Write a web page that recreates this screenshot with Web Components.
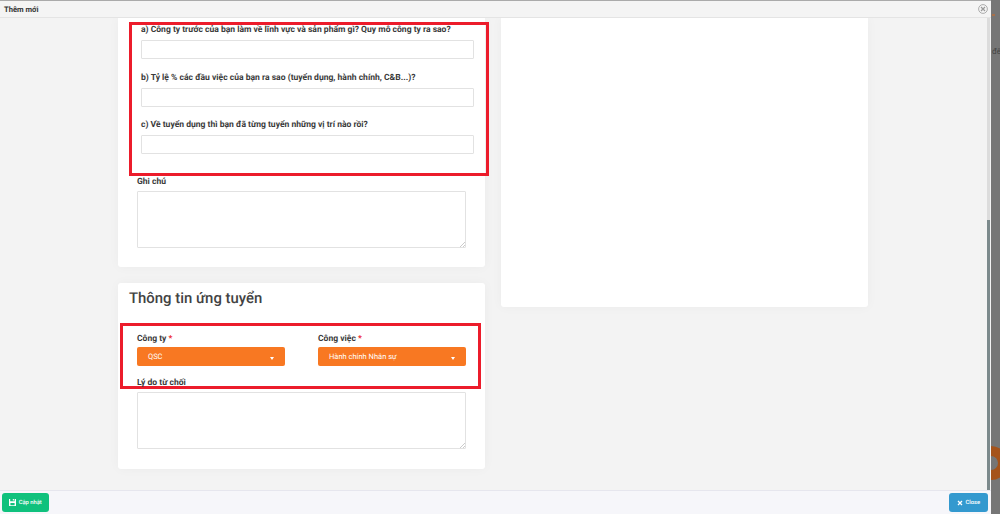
<!DOCTYPE html>
<html lang="vi">
<head>
<meta charset="utf-8">
<title>Thêm mới</title>
<style>
  html, body { margin: 0; height: 100%; overflow: hidden; }
  body { font-family: Roboto, "Liberation Sans", sans-serif; color: #333; text-rendering: geometricPrecision; }
</style>
</head>
<body>
<app-window>
  <modal-dialog>
    <span slot="title">Thêm mới</span>

    <form-column>
      <form-card first>
        <red-box variant="questions">
          <form-field wide label="a) Công ty trước của bạn làm về lĩnh vực và sản phẩm gì? Quy mô công ty ra sao?"></form-field>
          <form-field wide label="b) Tỷ lệ % các đầu việc của bạn ra sao (tuyển dụng, hành chính, C&amp;B...)?"></form-field>
          <form-field wide label="c) Về tuyển dụng thì bạn đã từng tuyển những vị trí nào rồi?"></form-field>
        </red-box>
        <note-field label="Ghi chú"></note-field>
      </form-card>
      <form-card>
        <h2 slot="heading">Thông tin ứng tuyển</h2>
        <red-box variant="apply">
          <select-row>
            <select-box label="Công ty" value="QSC"></select-box>
            <select-box label="Công việc" value="Hành chính Nhân sự"></select-box>
          </select-row>
          <span class="reason">Lý do từ chối</span>
        </red-box>
        <note-field tall></note-field>
      </form-card>
    </form-column>

    <form-column side>
      <form-card side></form-card>
    </form-column>

    <app-button slot="footer" color="green" icon="save">Cập nhật</app-button>
    <app-button slot="footer" color="blue" icon="close">Close</app-button>
  </modal-dialog>
</app-window>

<script>
function shadow(el, html) {
  el.attachShadow({ mode: 'open' }).innerHTML = html;
}

class AppWindow extends HTMLElement {
  constructor() {
    super();
    shadow(this, `
      <style>
        :host { display: flex; width: 1000px; height: 514px; overflow: hidden; background: #777; }
        .strip { width: 9px; flex: none; position: relative; overflow: hidden; background: #767676; }
        .dot { position: absolute; left: 1px; top: 14px; width: 3px; height: 2px; background: #a8704a; }
        .word { position: absolute; left: 1px; top: 47px; font: 8px Roboto, sans-serif; color: #444; }
        .ring { position: absolute; left: -17px; top: 446px; width: 14px; height: 14px; border: 10px solid #a5531b; border-radius: 50%; }
      </style>
      <slot></slot>
      <div class="strip">
        <div class="dot"></div>
        <div class="word">đế</div>
        <div class="ring"></div>
      </div>
    `);
  }
}
customElements.define('app-window', AppWindow);

class ModalDialog extends HTMLElement {
  constructor() {
    super();
    shadow(this, `
      <style>
        :host { display: flex; flex-direction: column; width: 991px; height: 514px; background: #f3f3f3; }
        header {
          height: 16px; flex: none; display: flex; align-items: center; justify-content: space-between;
          border-top: 1px solid #aaa; border-bottom: 1px solid #e4e4e4; padding: 0 3px 0 4px; background: #f4f4f4;
          font-size: 7.6px; font-weight: 700; color: #333;
        }
        header svg { display: block; }
        .middle { flex: 1; min-height: 0; display: flex; }
        .body { flex: 1; min-width: 0; overflow: hidden; display: flex; gap: 16px; padding-left: 118px; }
        .bar { width: 3px; flex: none; margin-right: 1px; display: flex; flex-direction: column; background: #dcdcdc; }
        .bar i { display: block; height: 202px; flex: none; }
        .bar b { display: block; flex: 1; background: #7c8a8c; }
        footer {
          height: 23px; flex: none; display: flex; align-items: center; justify-content: space-between;
          border-top: 1px solid #e6e6ee; padding: 0 3px 0 2px; background: #f6f6fa;
        }
      </style>
      <header>
        <slot name="title"></slot>
        <svg width="10" height="10" viewBox="0 0 10 10" fill="none" stroke="#9a9a9a">
          <circle cx="5" cy="5" r="4.4" stroke-width=".8"/>
          <path d="M3 3l4 4M7 3l-4 4" stroke-width="1.2"/>
        </svg>
      </header>
      <div class="middle">
        <div class="body"><slot></slot></div>
        <div class="bar"><i></i><b></b></div>
      </div>
      <footer><slot name="footer"></slot></footer>
    `);
  }
}
customElements.define('modal-dialog', ModalDialog);

class FormColumn extends HTMLElement {
  constructor() {
    super();
    shadow(this, `
      <style>
        :host { display: flex; flex-direction: column; gap: 16px; width: 367px; flex: none; }
      </style>
      <slot></slot>
    `);
  }
}
customElements.define('form-column', FormColumn);

class FormCard extends HTMLElement {
  constructor() {
    super();
    shadow(this, `
      <style>
        :host {
          display: block; background: #fff; border-radius: 3px; box-sizing: border-box;
          box-shadow: 0 0 12px rgba(0,0,0,.035); padding: 0 19px 20px;
        }
        :host([first]) { border-radius: 0 0 3px 3px; padding-top: 4px; height: 249px; }
        :host([side]) { height: 289px; border-radius: 0 0 3px 3px; padding: 0; }
        :host(:not([first]):not([side])) { height: 186px; }
        ::slotted(h2) {
          margin: 7px 0 16px -8px; font-size: 14.9px; line-height: 17px; font-weight: 500; color: #424242;
        }
      </style>
      <slot name="heading"></slot>
      <slot></slot>
    `);
  }
}
customElements.define('form-card', FormCard);

class RedBox extends HTMLElement {
  constructor() {
    super();
    shadow(this, `
      <style>
        :host { display: block; box-sizing: border-box; border: 3px solid #ec1c2b; }
        :host([variant=questions]) { width: 360px; height: 154px; margin: 0 0 0 -8px; padding: 0 12px 0 9px; }
        :host([variant=apply]) { width: 361px; height: 66px; margin: 0 0 3px -17px; padding: 7px 12px 0 14px; }
        ::slotted(.reason) { display: block; margin-top: 12px; font-size: 8.55px; line-height: 11px; font-weight: 700; color: #3a3a3a; }
      </style>
      <slot></slot>
    `);
  }
}
customElements.define('red-box', RedBox);

class FormField extends HTMLElement {
  constructor() {
    super();
    shadow(this, `
      <style>
        :host { display: block; height: 47.5px; }
        label { display: block; height: 15px; line-height: 11px; font-size: 8.55px; font-weight: 700; color: #3a3a3a; white-space: nowrap; }
        input {
          display: block; box-sizing: border-box; width: 333px; height: 19px; margin: 0; padding: 0 6px;
          border: 1px solid #e2e2e2; border-radius: 1px; background: #fff; outline: none;
        }
      </style>
      <label></label>
      <input type="text">
    `);
    this.shadowRoot.querySelector('label').textContent = this.getAttribute('label');
  }
}
customElements.define('form-field', FormField);

class NoteField extends HTMLElement {
  constructor() {
    super();
    shadow(this, `
      <style>
        :host { display: block; }
        label { display: block; height: 15px; line-height: 12px; font-size: 8.55px; font-weight: 700; color: #3a3a3a; }
        textarea {
          display: block; box-sizing: border-box; width: 329px; height: 57px; margin: 0; padding: 4px;
          border: 1px solid #e2e2e2; border-radius: 1px; background: #fff; outline: none;
        }
        textarea::-webkit-resizer {
          background: linear-gradient(135deg, transparent 55%, #ccc 55%, #ccc 65%, transparent 65%, transparent 78%, #ccc 78%, #ccc 88%, transparent 88%) no-repeat right bottom / 6px 6px;
        }
      </style>
      <label></label>
      <textarea></textarea>
    `);
    const label = this.shadowRoot.querySelector('label');
    if (this.hasAttribute('label')) label.textContent = this.getAttribute('label');
    else label.remove();
  }
}
customElements.define('note-field', NoteField);

class SelectRow extends HTMLElement {
  constructor() {
    super();
    shadow(this, `
      <style>
        :host { display: flex; gap: 33px; }
      </style>
      <slot></slot>
    `);
  }
}
customElements.define('select-row', SelectRow);

class SelectBox extends HTMLElement {
  constructor() {
    super();
    shadow(this, `
      <style>
        :host { display: block; width: 148px; }
        label { display: block; height: 14px; line-height: 12px; font-size: 8.55px; font-weight: 700; color: #3a3a3a; }
        label span { color: #ec1c2b; }
        .box {
          box-sizing: border-box; height: 19px; padding: 0 11px; display: flex; justify-content: space-between;
          background: #f87822; border-radius: 2px; color: #fff; font-size: 7.5px; line-height: 19px;
        }
        .caret { width: 0; height: 0; margin: 10px 0 0; border: 2.5px solid transparent; border-bottom: 0; border-top: 3px solid #fff; }
      </style>
      <label><b style="font-weight:inherit"></b> <span>*</span></label>
      <div class="box"><span class="text"></span><i class="caret"></i></div>
    `);
    this.shadowRoot.querySelector('b').textContent = this.getAttribute('label');
    this.shadowRoot.querySelector('.text').textContent = this.getAttribute('value');
  }
}
customElements.define('select-box', SelectBox);

const BUTTON_ICONS = {
  save: '<svg width="7" height="7" viewBox="0 0 7 7"><path fill="#fff" d="M0 0h1.2v2.2h4.4V0H7v7H0zM1.4 4v2.2h4.2V4zM3.8 0h1.1v1.6H3.8z"/></svg>',
  close: '<svg width="6" height="6" viewBox="0 0 6 6"><path stroke="#fff" stroke-width="1.3" d="M1 1l4 4M5 1L1 5"/></svg>'
};

class AppButton extends HTMLElement {
  constructor() {
    super();
    const color = this.getAttribute('color') === 'green' ? '#0fc17d' : '#3399cf';
    const width = this.getAttribute('color') === 'green' ? 47 : 39;
    shadow(this, `
      <style>
        :host { display: inline-flex; }
        .btn {
          display: flex; align-items: center; justify-content: center; gap: 2.5px; width: ${width}px; height: 19px;
          background: ${color}; border-radius: 3px; color: #fff; font-size: 5.8px; font-weight: 500;
        }
        svg { display: block; }
      </style>
      <div class="btn">${BUTTON_ICONS[this.getAttribute('icon')]}<slot></slot></div>
    `);
  }
}
customElements.define('app-button', AppButton);
</script>
</body>
</html>
